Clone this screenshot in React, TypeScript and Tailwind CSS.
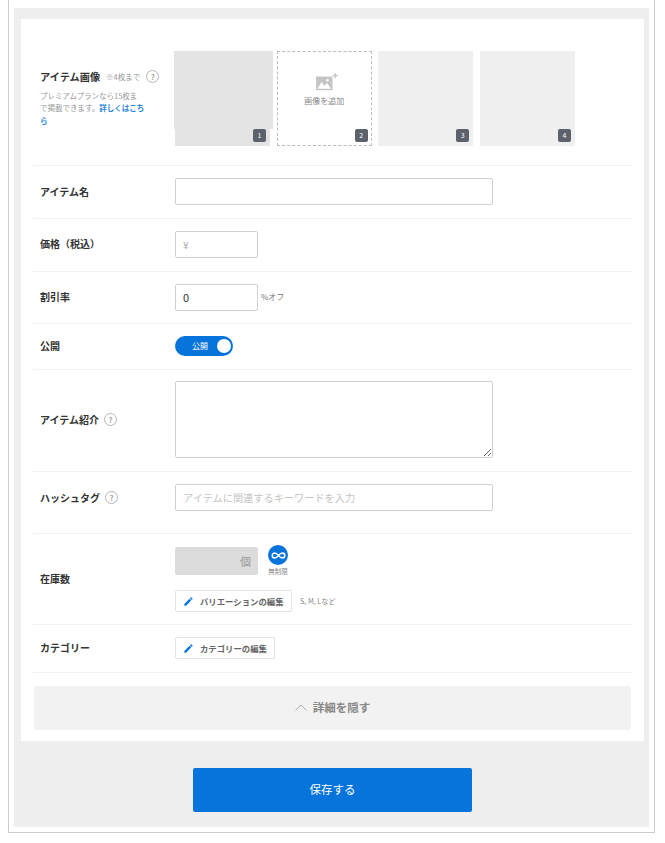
import { Infinity as InfinityIcon } from 'lucide-react'

const Help = () => (
  <span className="inline-flex h-[13px] w-[13px] items-center justify-center rounded-full border border-[#b5b5b5] text-[8px] leading-none text-[#aaa]">
    ?
  </span>
)

const Pencil = () => (
  <svg viewBox="0 0 24 24" className="h-[11px] w-[11px] fill-[#0774db]">
    <path d="M3 17.25V21h3.75L17.81 9.94l-3.75-3.75L3 17.25zM20.71 7.04a1 1 0 0 0 0-1.41l-2.34-2.34a1 1 0 0 0-1.41 0l-1.83 1.83 3.75 3.75 1.83-1.83z" />
  </svg>
)

const Badge = ({ n }: { n: number }) => (
  <span className="absolute bottom-[4px] right-[4px] flex h-[13px] w-[13px] items-center justify-center rounded-[2px] bg-[#5c616b] text-[7px] leading-none text-white">
    {n}
  </span>
)

const Row = ({ label, help, className, children }: { label: string; help?: boolean; className: string; children: React.ReactNode }) => (
  <div className={`flex items-center border-b border-[#f2f2f2] pl-[7px] ${className}`}>
    <div className="flex w-[135px] shrink-0 items-center gap-[5px] text-[10px] font-bold leading-[14px] text-[#333]">
      {label}
      {help && <Help />}
    </div>
    {children}
  </div>
)

const EditButton = ({ label, width }: { label: string; width: string }) => (
  <button className={`flex h-[22px] items-center gap-[6px] rounded-[2px] border border-[#e2e2e2] bg-white pl-[7px] text-[8.4px] font-bold leading-none text-[#666] ${width}`}>
    <Pencil />
    {label}
  </button>
)

const inputClass = 'h-[27px] rounded-[2px] border border-[#d0d0d0] bg-white px-[7px] outline-none'

export default function App() {
  return (
    <div className="ml-2 h-[833px] w-[647px] border-x border-b border-[#ccc] bg-white px-[5px] pb-[5px] pt-2 font-['Noto_Sans_CJK_JP','Noto_Sans',sans-serif]">
      <div className="h-full bg-[#eeeeee] pl-[7px] pr-[5px] pt-[11px]">
        <div className="h-[722px] bg-white px-3">
          <div className="flex items-center border-b border-[#f2f2f2] pb-[19px] pl-[7px] pt-[32px]">
            <div className="w-[135px] shrink-0">
              <div className="flex w-[125px] items-center text-[10.2px] font-bold leading-[14px] text-[#333]">
                アイテム画像
                <span className="ml-[6px] mr-[6px] whitespace-nowrap text-[7.5px] font-normal text-[#999]">※4枚まで</span>
                <Help />
              </div>
              <div className="mt-[6px] text-[7.5px] leading-[12.5px] text-[#999]">
                <div className="whitespace-nowrap">プレミアムプランなら15枚ま</div>
                <div className="whitespace-nowrap">
                  で掲載できます。<span className="font-bold text-[#2a85dc]">詳しくはこち</span>
                </div>
                <div className="font-bold text-[#2a85dc]">ら</div>
              </div>
            </div>
            <div className="flex gap-[6.67px]">
              <div className="relative h-[95px] w-[95px] bg-[#e4e4e4]">
                <div className="absolute -left-[1px] top-0 h-[78px] w-[99px] bg-[#e4e4e4]" />
                <Badge n={1} />
              </div>
              <div className="relative flex h-[95px] w-[95px] flex-col items-center border border-dashed border-[#bdbdbd] pt-[20px]">
                <svg viewBox="0 0 24 22" className="ml-[5px] h-[20px] w-[22px]">
                  <rect x="0" y="5" width="18" height="15" fill="#c4c4c4" />
                  <path d="M1.5 18.5 L6 11 L9 15 L12 12 L16.5 18.5Z" fill="#fff" />
                  <circle cx="12.5" cy="9" r="1.4" fill="#fff" />
                  <path d="M21 1v6M18 4h6" stroke="#c4c4c4" strokeWidth="1.4" />
                </svg>
                <span className="mt-[3px] text-[8px] leading-[12px] text-[#888]">画像を追加</span>
                <span className="absolute bottom-[3px] right-[3px] flex h-[13px] w-[13px] items-center justify-center rounded-[2px] bg-[#5c616b] text-[7px] leading-none text-white">
                  2
                </span>
              </div>
              <div className="relative h-[95px] w-[95px] bg-[#efefef]">
                <Badge n={3} />
              </div>
              <div className="relative h-[95px] w-[95px] bg-[#efefef]">
                <Badge n={4} />
              </div>
            </div>
          </div>

          <Row label="アイテム名" className="h-[53px] pb-[1px]">
            <input className={`${inputClass} w-[318px]`} />
          </Row>
          <Row label="価格（税込）" className="h-[52.5px] pb-[1px]">
            <input placeholder="¥" className={`${inputClass} w-[83px] text-[10px] placeholder:text-[#aaa]`} />
          </Row>
          <Row label="割引率" className="h-[52.5px]">
            <input defaultValue="0" className={`${inputClass} w-[83px] text-[11px] text-[#333]`} />
            <span className="ml-[3px] text-[8px] text-[#777]">%オフ</span>
          </Row>
          <Row label="公開" className="h-[45.5px]">
            <div className="flex h-[20px] w-[58px] items-center rounded-full bg-[#0774db] pl-[17px] pr-[2px]">
              <span className="text-[8px] leading-none text-white">公開</span>
              <span className="ml-auto h-[14px] w-[14px] rounded-full bg-white" />
            </div>
          </Row>
          <Row label="アイテム紹介" help className="h-[102px] pb-[1px]">
            <textarea className="h-[77px] w-[318px] rounded-[2px] border border-[#d0d0d0] bg-white outline-none" />
          </Row>
          <Row label="ハッシュタグ" help className="h-[62px] pb-[9px]">
            <input placeholder="アイテムに関連するキーワードを入力" className={`${inputClass} w-[318px] text-[10.2px] placeholder:text-[#c4c4c4]`} />
          </Row>
          <Row label="在庫数" className="h-[91px]">
            <div className="flex flex-col gap-[14px] pt-[2px]">
              <div className="flex items-start gap-[10px]">
                <div className="flex h-[28px] w-[83px] items-center justify-end rounded-[2px] bg-[#dcdcdc] pr-[7px] text-[11px] text-[#999]">個</div>
                <div className="-mt-[2px] flex flex-col items-center">
                  <span className="flex h-[20px] w-[20px] items-center justify-center rounded-full bg-[#0774db]">
                    <InfinityIcon size={15} strokeWidth={2.4} className="text-white" />
                  </span>
                  <span className="mt-[1px] text-[6.5px] leading-[10px] text-[#888]">無制限</span>
                </div>
              </div>
              <div className="flex items-center gap-[8px]">
                <EditButton label="バリエーションの編集" width="w-[117px]" />
                <span className="text-[7.2px] text-[#888]">S, M, Lなど</span>
              </div>
            </div>
          </Row>
          <Row label="カテゴリー" className="h-[48px]">
            <EditButton label="カテゴリーの編集" width="w-[100px]" />
          </Row>

          <div className="mx-[1px] mt-[13px] flex h-[44px] items-center justify-center gap-[6px] rounded-[2px] bg-[#f2f2f2] text-[11.5px] font-bold text-[#888]">
            <svg viewBox="0 0 12 7" className="h-[7px] w-[12px] fill-none stroke-[#999] stroke-[0.8]">
              <path d="M0.5 6.5 L6 1 L11.5 6.5" />
            </svg>
            詳細を隠す
          </div>
        </div>
        <button className="mx-auto mt-[27px] block h-[44px] w-[279px] rounded-[2px] bg-[#0774db] text-[11.5px] text-white">
          保存する
        </button>
      </div>
    </div>
  )
}
